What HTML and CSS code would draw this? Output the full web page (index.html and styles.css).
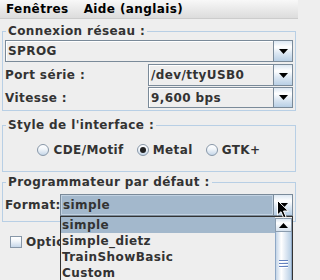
FILE: index.html
```html
<!DOCTYPE html>
<html lang="fr">
<head>
<meta charset="utf-8">
<title>Préférences</title>
<link rel="stylesheet" href="styles.css">
</head>
<body>
<div class="menubar">
  <span class="menu">Fenêtres</span>
  <span class="menu">Aide (anglais)</span>
</div>
<div class="panel">
  <fieldset class="group group-conn">
    <legend>Connexion réseau :</legend>
    <div class="combo combo-first">
      <span class="combo-text">SPROG</span>
      <span class="combo-btn"><svg class="tri" viewBox="0 0 9 5" width="9" height="5"><polygon points="0,0 9,0 4.5,5"/></svg></span>
    </div>
    <div class="grid2">
      <span class="label">Port série :</span>
      <div class="combo">
        <span class="combo-text">/dev/ttyUSB0</span>
        <span class="combo-btn"><svg class="tri" viewBox="0 0 9 5" width="9" height="5"><polygon points="0,0 9,0 4.5,5"/></svg></span>
      </div>
      <span class="label">Vitesse :</span>
      <div class="combo combo-short">
        <span class="combo-text">9,600 bps</span>
        <span class="combo-btn"><svg class="tri" viewBox="0 0 9 5" width="9" height="5"><polygon points="0,0 9,0 4.5,5"/></svg></span>
      </div>
    </div>
  </fieldset>

  <fieldset class="group group-style">
    <legend>Style de l'interface :</legend>
    <div class="radios">
      <span class="radio"><span class="radio-icon"></span>CDE/Motif</span>
      <span class="radio"><span class="radio-icon checked"></span>Metal</span>
      <span class="radio"><span class="radio-icon"></span>GTK+</span>
    </div>
  </fieldset>

  <fieldset class="group group-prog">
    <legend>Programmateur par défaut :</legend>
    <div class="format-row">
      <span class="label format-label">Format:</span>
      <div class="combo combo-open">
        <span class="combo-text">simple</span>
        <span class="combo-btn"><svg class="tri" viewBox="0 0 9 5" width="9" height="5"><polygon points="0,0 9,0 4.5,5"/></svg></span>
        <div class="popup">
          <ul class="popup-list">
            <li class="sel">simple</li>
            <li>simple_dietz</li>
            <li>TrainShowBasic</li>
            <li>Custom</li>
          </ul>
          <div class="scrollbar">
            <div class="sb-btn"><svg class="tri" viewBox="0 0 9 5" width="9" height="5"><polygon points="0,5 9,5 4.5,0"/></svg></div>
            <div class="sb-thumb"><span class="grip"></span></div>
          </div>
        </div>
      </div>
    </div>
  </fieldset>

  <div class="check-row"><span class="checkbox"></span><span class="check-text">Options</span></div>
</div>

<svg class="cursor" viewBox="0 0 13 19" width="13" height="19">
  <polygon points="0.5,0.5 0.5,15 4,11.7 6.6,17.8 9,16.8 6.5,11 11.3,11" fill="#000" stroke="#fff" stroke-width="1" stroke-linejoin="miter"/>
</svg>
</body>
</html>
```

FILE: styles.css
```css
html, body {
  margin: 0;
  padding: 0;
  overflow: hidden;
}

body {
  width: 298px;
  height: 280px;
  background: #eeeeee;
  font-family: "DejaVu Sans", "Liberation Sans", sans-serif;
  font-weight: bold;
  font-size: 12px;
  line-height: 14px;
  letter-spacing: 0.4px;
  color: #333333;
  position: relative;
}

/* ---------- menu bar ---------- */
.menubar {
  display: flex;
  align-items: center;
  gap: 15px;
  height: 18px;
  padding-left: 6px;
  background: linear-gradient(#f8f8f8, #dcdcdc);
  border-bottom: 1px solid #cccccc;
  color: #000000;
}

/* ---------- panel & titled borders ---------- */
.panel {
  padding: 0 2px;
}

.group {
  margin: 0;
  border: 1px solid #b8cfe5;
  min-width: 0;
  padding: 2px 2px 2px 2px;
}

.group legend {
  padding: 0 2px;
  margin-left: 1px;
  line-height: 14px;
}

.group-conn {
  margin-top: 5px;
}

.group-style {
  margin-top: 7px;
  padding: 8px 2px 11px 2px;
}

.group-prog {
  margin-top: 3px;
  padding: 5px 2px 5px 2px;
}

/* ---------- combo boxes ---------- */
.combo {
  display: flex;
  box-sizing: border-box;
  height: 22px;
  border: 1px solid #7a8a99;
  background: #eeeeee;
  position: relative;
}

.combo-first {
  margin-bottom: 2px;
}

.combo-text {
  flex: 1;
  min-width: 0;
  padding-left: 2px;
  line-height: 20px;
  white-space: nowrap;
  overflow: hidden;
  box-shadow: inset 1px 1px 0 #ffffff;
}

.combo-btn {
  box-sizing: border-box;
  width: 19px;
  flex: none;
  border-left: 1px solid #7a8a99;
  background: linear-gradient(#dde8f3, #ffffff 30%, #dde8f3 60%, #b8cfe5);
  display: flex;
  align-items: center;
  justify-content: center;
}

.tri {
  display: block;
  fill: #000000;
}

.grid2 {
  display: grid;
  grid-template-columns: 143px 1fr;
  grid-template-rows: 22px 21px;
  row-gap: 1px;
  align-items: center;
}

.grid2 .combo {
  height: 100%;
}

.label {
  white-space: nowrap;
}

/* ---------- radio buttons ---------- */
.radios {
  display: flex;
  justify-content: center;
  align-items: center;
  gap: 13px;
  height: 20px;
}

.radio {
  display: flex;
  align-items: center;
  gap: 4px;
}

.radio-icon {
  box-sizing: border-box;
  width: 12px;
  height: 12px;
  border-radius: 50%;
  border: 1px solid #8797a8;
  background: linear-gradient(#ffffff, #f2f6fa 40%, #c6d7e9);
  display: flex;
  align-items: center;
  justify-content: center;
}

.radio-icon.checked::after {
  content: "";
  width: 6px;
  height: 6px;
  border-radius: 50%;
  background: #222222;
}

/* ---------- format row & open combo ---------- */
.format-row {
  display: flex;
  align-items: center;
}

.format-label {
  flex: none;
  width: 55px;
}

.combo-open {
  flex: 1;
}

.combo-open .combo-text {
  background: #a3b8cc;
  box-shadow: inset 0 0 0 1px #c2d2e2;
}

.popup {
  position: absolute;
  top: calc(100% + 1px);
  left: -1px;
  right: -1px;
  display: flex;
  border: 1px solid #333333;
  background: #eeeeee;
  z-index: 5;
}

.popup-list {
  flex: 1;
  list-style: none;
  margin: 0;
  padding: 0;
}

.popup-list li {
  height: 16px;
  line-height: 16px;
  padding-left: 1px;
  white-space: nowrap;
}

.popup-list li.sel {
  background: #a3b8cc;
}

.scrollbar {
  width: 17px;
  flex: none;
  display: flex;
  flex-direction: column;
  padding-top: 1px;
  box-sizing: border-box;
}

.sb-btn {
  box-sizing: border-box;
  height: 14px;
  border: 1px solid #8a9cae;
  background: linear-gradient(#dde8f3, #ffffff 35%, #eef3f8 60%, #d6e2ee);
  display: flex;
  align-items: center;
  justify-content: center;
}

.sb-thumb {
  box-sizing: border-box;
  height: 64px;
  border: 1px solid #8ea8c6;
  border-top: none;
  background: linear-gradient(to right, #c4d5e8, #ffffff 35%, #e4ecf5 60%, #b8cfe5);
  display: flex;
  justify-content: center;
  padding-top: 28px;
}

.grip {
  display: block;
  width: 9px;
  height: 8px;
  background: repeating-linear-gradient(#6382bf 0 1px, #ffffff 1px 2px, transparent 2px 3px);
}

/* ---------- check row ---------- */
.check-row {
  display: flex;
  align-items: center;
  gap: 4px;
  height: 14px;
  margin-top: 13px;
  padding-left: 8px;
  white-space: nowrap;
}

.checkbox {
  box-sizing: border-box;
  flex: none;
  width: 12px;
  height: 12px;
  border: 1px solid #8797a8;
  background: linear-gradient(#ffffff, #f2f6fa 40%, #c6d7e9);
}

/* ---------- mouse pointer overlay ---------- */
.cursor {
  position: absolute;
  left: 277px;
  top: 200px;
  z-index: 10;
  overflow: visible;
}
```
